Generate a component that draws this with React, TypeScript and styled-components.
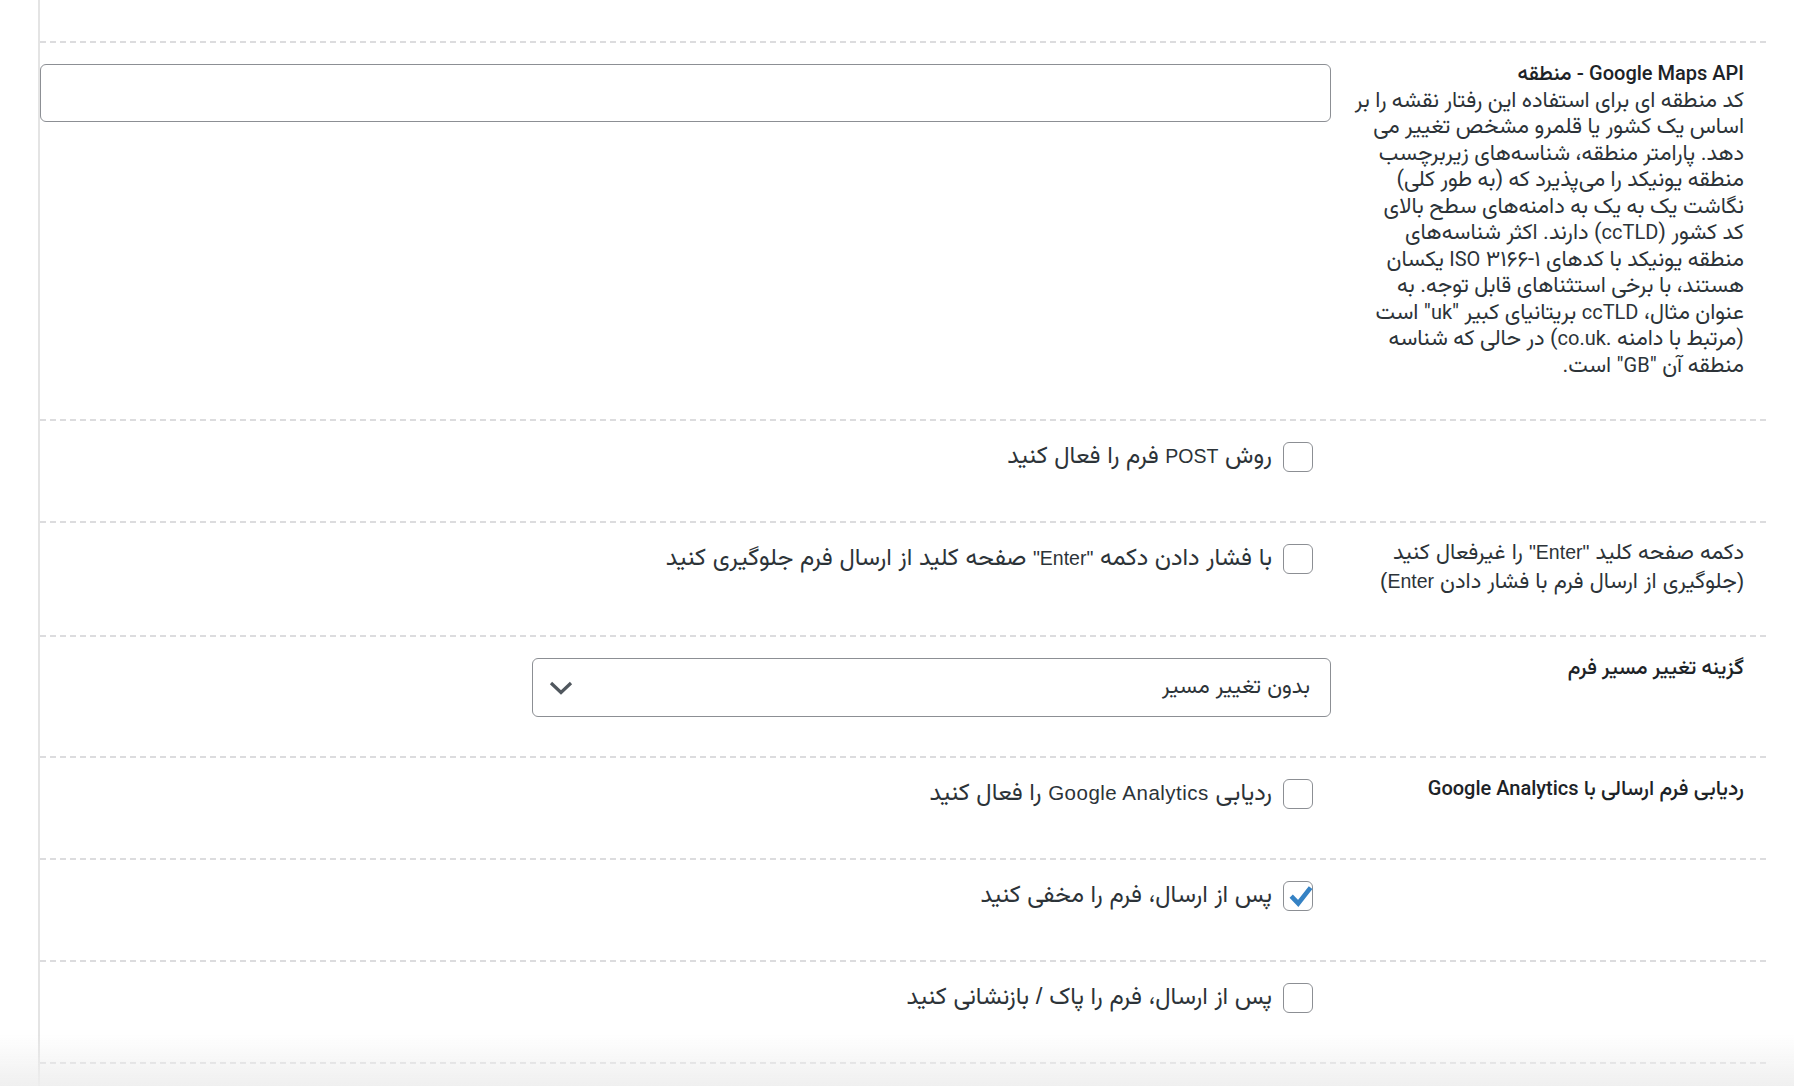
import React from "react";
import styled, { createGlobalStyle } from "styled-components";

const PERSIAN = `"Vazirmatn", "Noto Sans Arabic", "Noto Naskh Arabic", "DejaVu Sans", sans-serif`;

const GlobalStyle = createGlobalStyle`
  html, body {
    margin: 0;
    padding: 0;
    background: #ffffff;
  }
  body {
    font-family: Roboto, ${PERSIAN};
    color: #1d2327;
  }
`;

// the description wraps like this in the original column
const regionLines = [
  "کد منطقه ای برای استفاده این رفتار نقشه را بر",
  "اساس یک کشور یا قلمرو مشخص تغییر می",
  "دهد. پارامتر منطقه، شناسه‌های زیربرچسب",
  "منطقه یونیکد را می‌پذیرد که (به طور کلی)",
  "نگاشت یک به یک به دامنه‌های سطح بالای",
  "کد کشور (ccTLD) دارند. اکثر شناسه‌های",
  "منطقه یونیکد با کدهای ISO ۳۱۶۶-۱ یکسان",
  "هستند، با برخی استثناهای قابل توجه. به",
  'عنوان مثال، ccTLD بریتانیای کبیر "uk" است',
  "(مرتبط با دامنه .co.uk) در حالی که شناسه",
  'منطقه آن "GB" است.',
];

// latin words sit in a smaller face than the persian around them
const withLatin = (text: string) =>
  text.split(/([A-Za-z][A-Za-z.]*(?: [A-Za-z][A-Za-z.]*)*)/).map((part, i) =>
    i % 2 === 1 ? <DinLatin key={i}>{part}</DinLatin> : part
  );

const CheckMark = () => (
  <svg width="30" height="30" viewBox="0 0 30 30">
    <path
      d="M8.2 15.2 L15.2 22.4 L27.6 6.6"
      fill="none"
      stroke="#3582c4"
      strokeWidth="4.6"
      strokeLinejoin="miter"
    />
  </svg>
);

const Chevron = () => (
  <svg width="24" height="14" viewBox="0 0 24 14">
    <polyline
      points="2,2 12,11.5 22,2"
      fill="none"
      stroke="#50575e"
      strokeWidth="3.2"
    />
  </svg>
);

interface CheckRowProps {
  children: React.ReactNode;
  checked?: boolean;
}

const CheckRow = ({ children, checked }: CheckRowProps) => (
  <CheckLabel>
    <Box $checked={!!checked}>{checked && <CheckMark />}</Box>
    <CheckText>{children}</CheckText>
  </CheckLabel>
);

const App = () => {
  return (
    <>
      <GlobalStyle />
      <Page>
        <Panel dir="rtl">
          <TopGap />

          <Row>
            <Head>
              <HeadTitle>{withLatin("Google Maps API - منطقه")}</HeadTitle>
              <HeadDescription>
                {regionLines.map((line, i) => (
                  <DescLine key={i}>{withLatin(line)}</DescLine>
                ))}
              </HeadDescription>
            </Head>
            <Cell>
              <TextInput type="text" />
            </Cell>
          </Row>

          <Row>
            <Head />
            <Cell>
              <CheckRow>
                روش <Latin>POST</Latin> فرم را فعال کنید
              </CheckRow>
            </Cell>
          </Row>

          <Row>
            <Head $plain>
              <PlainTitle>
                <DescLine>
                  دکمه صفحه کلید <Latin>"Enter"</Latin> را غیرفعال کنید
                </DescLine>
                <DescLine>
                  (جلوگیری از ارسال فرم با فشار دادن <Latin>Enter</Latin>)
                </DescLine>
              </PlainTitle>
            </Head>
            <Cell>
              <CheckRow>
                با فشار دادن دکمه <Latin>"Enter"</Latin> صفحه کلید از ارسال فرم
                جلوگیری کنید
              </CheckRow>
            </Cell>
          </Row>

          <Row>
            <Head>
              <HeadTitle>گزینه تغییر مسیر فرم</HeadTitle>
            </Head>
            <Cell>
              <SelectBox>
                <SelectValue>بدون تغییر مسیر</SelectValue>
                <Chevron />
              </SelectBox>
            </Cell>
          </Row>

          <Row>
            <Head>
              <HeadTitle>{withLatin("ردیابی فرم ارسالی با Google Analytics")}</HeadTitle>
            </Head>
            <Cell>
              <CheckRow>
                ردیابی <Latin $wide>Google Analytics</Latin> را فعال کنید
              </CheckRow>
            </Cell>
          </Row>

          <Row>
            <Head />
            <Cell>
              <CheckRow checked>پس از ارسال، فرم را مخفی کنید</CheckRow>
            </Cell>
          </Row>

          <Row>
            <Head />
            <Cell>
              <CheckRow>پس از ارسال، فرم را پاک / بازنشانی کنید</CheckRow>
            </Cell>
          </Row>

          <LastRule />
        </Panel>
        <BottomFade />
      </Page>
    </>
  );
};

export default App;

const Page = styled.div`
  min-height: 1086px;
  padding-left: 38px;
  box-sizing: border-box;
`;

const Panel = styled.div`
  width: 1726px;
  min-height: 1086px;
  border-left: 2px solid #e4e4e4;
  box-sizing: content-box;
`;

const TopGap = styled.div`
  height: 41px;
`;

const Row = styled.div`
  display: grid;
  grid-template-columns: 435px 1fr;
  border-top: 2px dashed #dcdcde;
`;

const Head = styled.div<{ $plain?: boolean }>`
  padding: ${(p) => (p.$plain ? "15px 22px 40px 24px" : "17px 22px 41px 24px")};
`;

const HeadTitle = styled.div`
  font-family: Roboto, ${PERSIAN};
  font-size: 21px;
  font-weight: 500;
  line-height: 26.5px;
  color: #1d2327;
`;

const HeadDescription = styled.div`
  font-family: Roboto, ${PERSIAN};
  font-size: 22px;
  font-weight: 400;
  line-height: 26.5px;
  color: #2c3338;
`;

const DescLine = styled.div`
  white-space: nowrap;
`;

const DinLatin = styled.span`
  font-family: Roboto, sans-serif;
  font-size: 20px;
`;

const Latin = styled.span<{ $wide?: boolean }>`
  font-family: "Liberation Sans", sans-serif;
  font-size: ${(p) => (p.$wide ? "20.5px" : "19.5px")};
  letter-spacing: ${(p) => (p.$wide ? "0.5px" : "0")};
`;

const PlainTitle = styled.div`
  font-family: "Liberation Sans", ${PERSIAN};
  font-size: 22px;
  line-height: 27.5px;
  color: #2c3338;
`;

const Cell = styled.div`
  padding: 21px 0 39px;
`;

const TextInput = styled.input`
  display: block;
  width: 100%;
  height: 58px;
  box-sizing: border-box;
  border: 1.5px solid #8c8f94;
  border-radius: 6px;
  background: #fff;
  font-size: 20px;
  outline: none;
`;

const SelectBox = styled.div`
  width: 799px;
  height: 59px;
  box-sizing: border-box;
  border: 1.5px solid #8c8f94;
  border-radius: 6px;
  background: #fff;
  display: flex;
  align-items: center;
  justify-content: space-between;
  padding: 0 20px 0 16px;
`;

const SelectValue = styled.span`
  font-family: "Liberation Sans", ${PERSIAN};
  font-size: 22px;
  color: #2c3338;
`;

const CheckLabel = styled.label`
  display: flex;
  align-items: center;
  gap: 11px;
  height: 30px;
  margin-right: 18px;
  margin-bottom: 10px;
`;

const Box = styled.span<{ $checked: boolean }>`
  flex: none;
  width: 30px;
  height: 30px;
  box-sizing: border-box;
  border: 1.5px solid #8c8f94;
  border-radius: 6px;
  background: #fff;
  display: flex;
  align-items: center;
  justify-content: center;

  svg {
    margin: -1.5px;
  }
`;

const CheckText = styled.span`
  font-family: "Liberation Sans", ${PERSIAN};
  font-size: 24px;
  line-height: 30px;
  margin-top: -4px;
  color: #2c3338;
  white-space: nowrap;
`;

const LastRule = styled.div`
  border-top: 2px dashed #dcdcde;
`;

const BottomFade = styled.div`
  position: fixed;
  left: 0;
  right: 0;
  bottom: 0;
  height: 52px;
  pointer-events: none;
  background: linear-gradient(
    to bottom,
    rgba(238, 238, 238, 0) 0%,
    rgba(238, 238, 238, 0.9) 100%
  );
`;
